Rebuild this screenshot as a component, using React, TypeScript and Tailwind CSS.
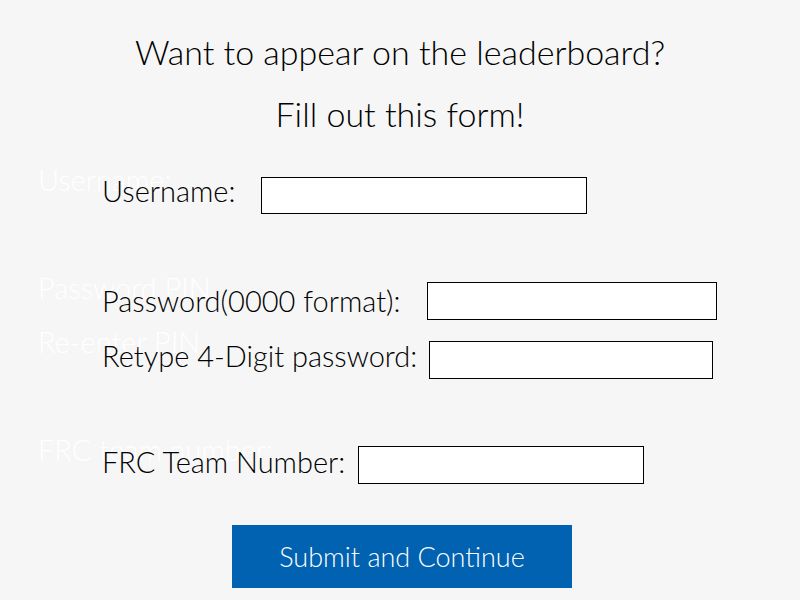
export default function App() {
  return (
    <div className="relative h-[600px] w-[800px] overflow-hidden bg-[#f6f6f6] text-black font-['Lato',sans-serif] font-light">
      {/* faded floating labels */}
      <div className="absolute left-[38px] top-[162px] text-[29px] leading-[36px] text-white">Username:</div>
      <div className="absolute left-[38px] top-[270px] text-[29px] leading-[36px] text-white">Password PIN</div>
      <div className="absolute left-[38px] top-[324px] text-[29px] leading-[36px] text-white">Re-enter PIN</div>
      <div className="absolute left-[38px] top-[432px] text-[29px] leading-[36px] text-white">FRC team number:</div>

      <div className="relative flex flex-col">
        <h1 className="mt-[30px] text-center text-[34px] leading-[44px]">
          Want to appear on the leaderboard?
        </h1>
        <h2 className="mt-[18px] text-center text-[34px] leading-[44px]">
          Fill out this form!
        </h2>

        <div className="mt-[41px] ml-[102px] flex items-center">
          <label className="text-[29px] leading-[34px] -mt-[9px]">Username:</label>
          <input className="ml-[26px] h-[37px] w-[326px] border border-black bg-white" />
        </div>

        <div className="mt-[68px] ml-[102px] flex items-center">
          <label className="text-[29px] leading-[34px]">Password(0000 format):</label>
          <input type="password" className="ml-[26px] h-[38px] w-[290px] border border-black bg-white" />
        </div>

        <div className="mt-[21px] ml-[102px] flex items-center">
          <label className="text-[29px] leading-[34px] -mt-[8px]">Retype 4-Digit password:</label>
          <input type="password" className="ml-[12px] h-[38px] w-[284px] border border-black bg-white" />
        </div>

        <div className="mt-[67px] ml-[102px] flex items-center">
          <label className="text-[29px] leading-[34px] -mt-[6px]">FRC Team Number:</label>
          <input className="ml-[13px] h-[38px] w-[286px] border border-black bg-white" />
        </div>

        <button className="mt-[41px] ml-[232px] h-[63px] w-[340px] bg-[#0062b1] pt-[2px] text-[27px] text-white">
          Submit and Continue
        </button>
      </div>
    </div>
  );
}
